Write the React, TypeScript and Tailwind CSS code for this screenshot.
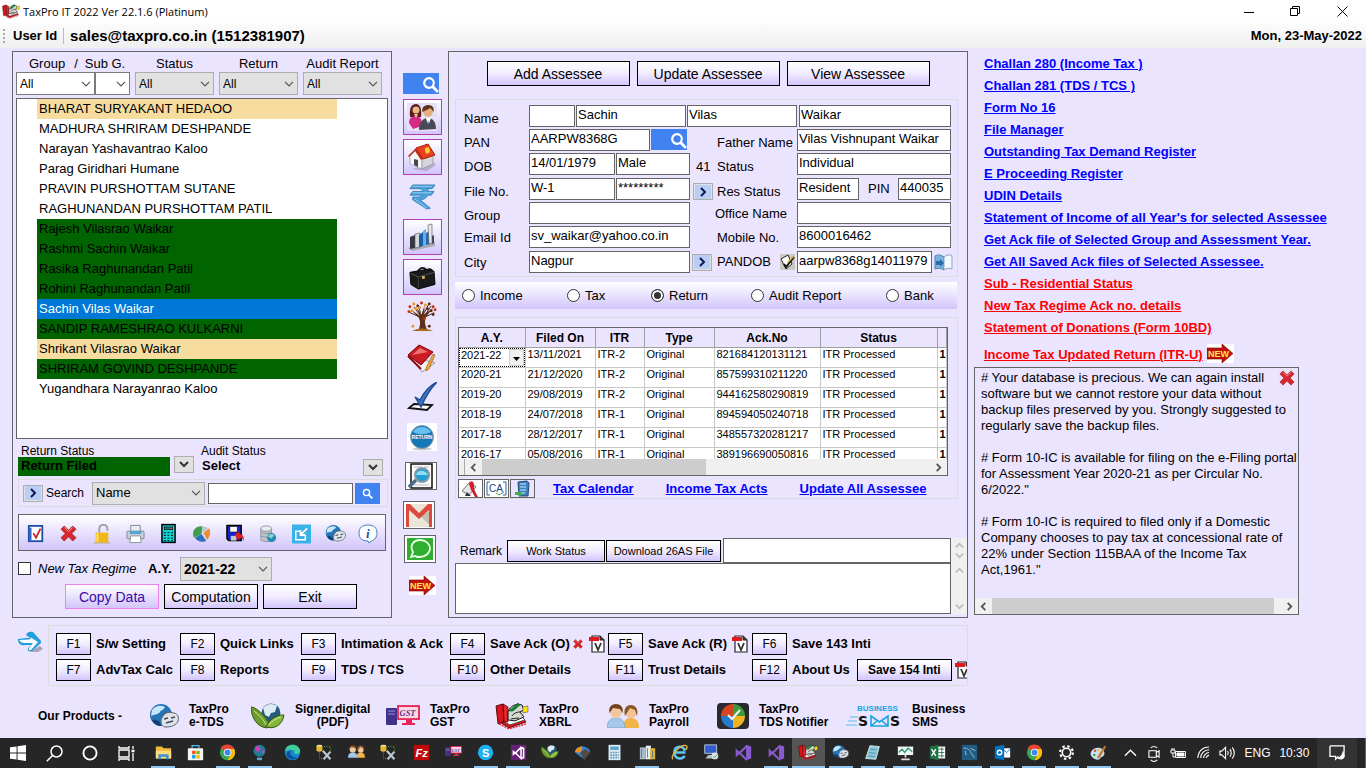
import React, { ReactNode } from 'react';

type IconProps = { className?: string };

/* ---------- shared class strings ---------- */

const violetButton = 'border border-black bg-gradient-to-b from-white via-[#f1ecff] to-[#d2c5fb] text-center whitespace-nowrap';
const fieldClass = 'h-[22px] min-w-0 border border-[#646464] bg-white px-px pb-1 text-[13px] leading-4 outline-none';
const groupBox = 'border border-[#dcdcdc]';

/* ---------- icons ---------- */

function Chevron({ className = '' }: IconProps) {
    return (
        <svg className={className} viewBox="0 0 10 6" width="10" height="6" fill="none" stroke="#555" strokeWidth="1.2">
            <path d="M1 .8 5 4.8 9 .8" />
        </svg>
    );
}

function ScrollArrow({ dir, faded }: { dir: 'left' | 'right' | 'up' | 'down'; faded?: boolean }) {
    const paths = { left: 'M7 1 3 5l4 4', right: 'M3 1l4 4-4 4', up: 'M1 7l4-4 4 4', down: 'M1 3l4 4 4-4' };
    return (
        <svg viewBox="0 0 10 10" width="9" height="9" fill="none" stroke={faded ? '#bdbdbd' : '#555'} strokeWidth="2">
            <path d={paths[dir]} />
        </svg>
    );
}

function SearchGlyph({ size = 17 }: { size?: number }) {
    return (
        <svg viewBox="0 0 17 17" width={size} height={size} fill="none" stroke="white" strokeWidth="2.2">
            <circle cx="7" cy="7" r="4.8" />
            <path d="m10.5 10.5 5.5 5.5" strokeWidth="2.8" />
        </svg>
    );
}

function BooksIcon({ size = 34 }: { size?: number }) {
    return (
        <svg viewBox="0 0 34 28" width={size} height={size * 0.82}>
            <path d="M3 19 14 26 31 20 28 16 8 16z" fill="#d71920" stroke="#6d0508" />
            <path d="M5 18 15 23 30 18 26 14 9 13z" fill="#fff" stroke="#333" strokeWidth=".8" />
            <path d="M1 4 8 2 9 20 3 22z" fill="#d9141b" stroke="#5b0508" />
            <path d="M8 2 13 5 13 20 9 20z" fill="#e4252c" stroke="#5b0508" strokeWidth=".8" />
            <path d="M13 10c2-6 8-9 14-7l2 5-4 2 4 5-9 4-7-1z" fill="#d5d8d1" stroke="#111" />
            <path d="M17 14c2-3 5-4 8-4M16 17l8-1" stroke="#222" fill="none" />
            <path d="M14 9 23 1l2 2-7 6z" fill="#118a35" stroke="#052" strokeWidth=".6" />
            <path d="M28 5l5-1v6l-5 1z" fill="#ffe600" stroke="#555" strokeWidth=".6" />
            <path d="m4 22 10 5 17-5" fill="none" stroke="#e1262d" strokeWidth="1.4" strokeDasharray="2 1" />
        </svg>
    );
}

function CrossIcon({ size = 18 }: { size?: number }) {
    return (
        <svg viewBox="0 0 18 18" width={size} height={size}>
            <path d="M4.5 1 9 5.5 13.5 1 17 4.5 12.5 9l4.5 4.5-3.5 3.5L9 12.5 4.5 17 1 13.5 5.500 9 1 4.500z" fill="#d8262c" stroke="#a22a2a" strokeWidth=".8" />
            <path d="M4.500 2.500 9 7l4.500-4.500" fill="none" stroke="#f49a94" />
        </svg>
    );
}

function NewArrow() {
    return (
        <span className="inline-block bg-white">
            <svg viewBox="0 0 27 19" width="27" height="19">
                <path d="M0 4h15V0l11 9.500L15 19v-4H0z" fill="#c3120e" stroke="#7d0000" strokeWidth=".6" />
                <text x="1" y="13" fontSize="9" fontWeight="700" fontFamily="Liberation Sans, sans-serif" fill="#ffe64a">NEW</text>
            </svg>
        </span>
    );
}

function GlobeIcon({ size = 30 }: { size?: number }) {
    return (
        <svg viewBox="0 0 30 24" width={size} height={size * 0.8}>
            <circle cx="12" cy="11" r="11" fill="#2674b4" />
            <path d="M3 6c4-5 9-5 13-3-2 4-3 2-5 5s-6 2-9 4z" fill="#c5e7fa" />
            <path d="M3 16c5-1 9 2 9 6-4 0-7-2-9-6z" fill="#123f77" />
            <path d="M14 12c2-4 7-4 11-3 4 1 5 4 4 8s-7 6-12 6c-4 0-5-3-5-6 0-2 1-3 2-5z" fill="#dfe3e9" stroke="#59616d" />
            <path d="m15 15 4-1m3 0 4-1m-9 6 7-2" stroke="#434b58" strokeWidth="1.500" />
        </svg>
    );
}

function LeafGlobe({ size = 34 }: { size?: number }) {
    return (
        <svg viewBox="0 0 34 26" width={size} height={size * 0.76}>
            <circle cx="20" cy="10" r="9.500" fill="#225c7d" />
            <path d="M12 5c4-5 10-5 14-2l-2 6-4 1-2 4-4-2z" fill="#dcecf2" />
            <path d="M0 4c4 0 13 7 18 16 2 3 0 5-3 5C7 24 0 16 0 4z" fill="#6c9c2b" stroke="#34570e" />
            <path d="M33 12c-8 0-15 5-18 12 8 3 17-2 18-12z" fill="#85b63e" stroke="#34570e" />
            <path d="M3 8c5 4 10 9 12 14m15-8c-5 2-9 4-12 8" fill="none" stroke="#d3e89c" />
        </svg>
    );
}

function GstIcon({ size = 34 }: { size?: number }) {
    return (
        <svg viewBox="0 0 34 22" width={size} height={size * 0.65}>
            <rect x="0" y="3" width="11" height="17" rx="1" fill="#40328b" />
            <path d="M2 6h7M2 9h7" stroke="#9c90dc" />
            <rect x="12" y="1" width="21" height="13" fill="#fbd9e4" stroke="#e62458" strokeWidth="1.800" />
            <text x="13.500" y="11" fontSize="8.500" fontWeight="700" fontStyle="italic" fontFamily="Liberation Serif, serif" fill="#59358c">GST</text>
            <path d="M20 15h6v3h3v2H16v-2h4z" fill="#e62458" />
        </svg>
    );
}

function PeopleIcon({ size = 32 }: { size?: number }) {
    return (
        <svg viewBox="0 0 32 25" width={size} height={size * 0.78}>
            <path d="M16 24c0-7 3-10 8-10s8 3 8 10z" fill="#f1b447" />
            <circle cx="24" cy="9" r="5.500" fill="#f2c396" />
            <path d="M18 12c-2-8 2-11 6-11s8 4 6 11l-2-6-5-2z" fill="#8c5726" />
            <path d="M0 24c0-7 4-10 9-10s9 3 9 10z" fill="#a7c8e8" stroke="#6d96bf" strokeWidth=".6" />
            <circle cx="9" cy="8" r="6" fill="#f1c89e" />
            <path d="M2.500 9C1 3 5 0 9 0s8 3 6.500 9L13 5 6 4z" fill="#70431d" />
        </svg>
    );
}

function NotifierIcon() {
    return (
        <svg viewBox="0 0 32 26" width="32" height="26">
            <rect width="32" height="26" rx="4" fill="#2a2a2e" />
            <path d="M16 13V1a12 12 0 0 1 12 12z" fill="#3d9c3a" />
            <path d="M16 13H28a12 12 0 0 1-12 12z" fill="#eeb422" />
            <path d="M16 13v12A12 12 0 0 1 4 13z" fill="#2679cc" />
            <path d="M16 13H4A12 12 0 0 1 16 1z" fill="#d7421f" />
            <path d="m11 12 4 4 8-9" fill="none" stroke="#f4f4f4" strokeWidth="2.200" />
        </svg>
    );
}

function SmsIcon() {
    return (
        <svg viewBox="0 0 56 28" width="56" height="28">
            <text x="11" y="9" fontSize="8" fontWeight="700" fontFamily="Liberation Sans, sans-serif" fill="#18a4e0">BUSINESS</text>
            <path d="M4 15h8M2 19h9M0 23h11" stroke="#5abfe9" />
            <text x="12" y="24" fontSize="14" fontWeight="700" fontFamily="DejaVu Sans, sans-serif" fill="#111">S</text>
            <path d="M25 14v10h17V14l-8.500 6zM25 24l6-5m11 5-6-5" fill="none" stroke="#18a4e0" strokeWidth="1.600" />
            <text x="44" y="24" fontSize="14" fontWeight="700" fontFamily="DejaVu Sans, sans-serif" fill="#111">S</text>
        </svg>
    );
}

function CoupleIcon() {
    return (
        <svg viewBox="0 0 30 28" width="30" height="28">
            <rect width="30" height="28" fill="#e7e0fb" />
            <path d="M3 14C2 4 5 1 9 1s6 5 5 13z" fill="#5b1f1b" />
            <path d="M2 20c0-5 3-7 7-7s6 3 6 10l-9 3z" fill="#d52b87" />
            <circle cx="9" cy="7" r="3.500" fill="#edb58b" />
            <path d="M7 11l2 4 2-4z" fill="#f2c6a0" />
            <path d="M12 27c0-8 4-12 9-12s8 4 8 11z" fill="#4a4b52" />
            <path d="m19 15 2 8 3-8z" fill="#fff" />
            <path d="m21 17 1 5-1 2-1-2z" fill="#27498b" />
            <circle cx="21" cy="9" r="4.800" fill="#e6ad7f" />
            <path d="M15.500 9c-1-5 2-7 6-7s6 3 5 7l-3-4z" fill="#5f3517" />
        </svg>
    );
}

function HouseIcon() {
    return (
        <svg viewBox="0 0 30 30" width="30" height="30">
            <path d="M5 27 20 29 29 23 26 20z" fill="#9c94b3" opacity=".6" />
            <path d="M3 14 9 8l6 8v11L3 22z" fill="#f5f5f7" stroke="#9a9aa2" strokeWidth=".7" />
            <path d="m15 16 11-4v10l-11 5z" fill="#d5d6dc" stroke="#8d8d95" strokeWidth=".7" />
            <path d="M9 6 21 2l7 11-12 4z" fill="#e9401f" stroke="#a11f0d" />
            <path d="M1 14 9 6l7 11-2 1-6-9-6 6z" fill="#c42a12" />
            <path d="M7 17l4 1v7l-4-2z" fill="#444951" />
            <path d="m18 6 4-1 1 5-3 2-2-2z" fill="#f7ce2f" />
        </svg>
    );
}

function RupeeIcon() {
    return (
        <svg viewBox="0 0 30 28" width="28" height="26">
            <path d="M5 1h24l-3 4h-6c2 1 2 2 2 3h6l-3 4h-4c-1 3-4 5-8 5l11 9-4 1L5 17v-3h5c3 0 5-1 6-2H2l3-4h11c0-2-2-3-5-3H2z" fill="#4ba3da" stroke="#2474ad" strokeWidth=".8" />
            <path d="M5 2.500h21M5 9.500h20M7 16l13 10" fill="none" stroke="#a9d9f4" strokeWidth=".8" />
        </svg>
    );
}

function ChartIcon() {
    return (
        <svg viewBox="0 0 30 28" width="30" height="28">
            <path d="M1 25 28 19v4L5 28z" fill="#a9a9b3" />
            <path d="M3 14l5-2v13l-5 1z" fill="#333841" />
            <path d="M8 11l5-1v14l-5 1z" fill="#d4d8dd" stroke="#555" strokeWidth=".6" />
            <path d="M12 12l4-3v14l-4 1z" fill="#1b5ea6" />
            <path d="M16 8l3-2v16l-3 1z" fill="#67aee6" />
            <path d="M19 10l4-2v13l-4 1z" fill="#2168b3" />
            <path d="M21 2l4-1v19l-3 1z" fill="#e4e6ea" stroke="#555" strokeWidth=".6" />
            <path d="M25 13l2-1v8l-2 1z" fill="#44484f" />
        </svg>
    );
}

function BriefcaseIcon() {
    return (
        <svg viewBox="0 0 30 28" width="28" height="26">
            <path d="M10 8c0-5 9-7 10-2l-2 1c-1-3-6-1-6 1z" fill="#222" />
            <path d="M2 9 24 5l4 3 1 14-18 5-8-5z" fill="#1a1a1c" stroke="#000" />
            <path d="M3 10l8 4 17-5" fill="none" stroke="#555" />
            <path d="M11 14v12" stroke="#444" />
            <rect x="15" y="13" width="3" height="3" fill="#d3b75b" />
        </svg>
    );
}

function TreeIcon() {
    const leaves = [[3, 6], [7, 3], [11, 5], [15, 2], [19, 4], [23, 3], [27, 6], [5, 10], [25, 10], [29, 9], [9, 8], [21, 8], [2, 11], [13, 7], [27, 14], [18, 18], [6, 26], [23, 26]];
    return (
        <svg viewBox="0 0 32 32" width="31" height="31">
            <path d="M12 30c2-6 2-9 0-13L4 9l9 6-3-8 5 7 3-9 0 9 9-7-7 9c-2 4-2 8 1 14z" fill="#5f3016" />
            <path d="M7 6 13 14M25 5l-6 9M3 12l9 4M28 12l-8 4M11 4l3 8M22 4l-4 8" stroke="#43230f" />
            {leaves.map(([x, y], i) => (
                <circle key={i} cx={x} cy={y} r="1.500" fill={i % 3 === 0 ? '#c62f13' : i % 3 === 1 ? '#e59a1c' : '#5d2c12'} />
            ))}
            <path d="M5 31c8-4 15-3 22 0z" fill="#a66a1e" />
        </svg>
    );
}

function RedBookIcon() {
    return (
        <svg viewBox="0 0 30 29" width="30" height="29">
            <path d="M1 12 10 22 15 28 28 19z" fill="#f2f0f0" stroke="#777" strokeWidth=".7" />
            <path d="M1 11 12 1l14 7-12 13z" fill="#cb1c23" stroke="#77080c" />
            <path d="m5 11 8-7 8 4z" fill="#ee7474" />
            <path d="m19 24 7-14 2 1-6 14-3 2z" fill="#f1a437" stroke="#8b561b" strokeWidth=".6" />
            <path d="M1 12l13 13" stroke="#8a0b11" strokeWidth="2" />
        </svg>
    );
}

function TickIcon({ size = 30 }: { size?: number }) {
    return (
        <svg viewBox="0 0 30 30" width={size} height={size}>
            <path d="M7 22 25 23l-5 5-18-2z" fill="#fff" stroke="#111" strokeWidth="1.800" />
            <path d="m8 15 5 3C17 10 22 4 30 0 22 8 18 16 14 25z" fill="#3f74c4" stroke="#1f4a92" strokeWidth="1.400" />
        </svg>
    );
}

function ReturnBadge() {
    return (
        <span className="bg-white">
            <svg viewBox="0 0 30 28" width="30" height="28">
                <ellipse cx="15" cy="26" rx="10" ry="1.500" fill="#ccc" />
                <circle cx="15" cy="14" r="11.500" fill="#1677b9" stroke="#8b9caa" />
                <path d="M6 9c3-6 14-7 18 0-6 3-12 3-18 0z" fill="#66c1ee" />
                <text x="15" y="16" fontSize="5" fontWeight="700" fontFamily="Liberation Sans, sans-serif" textAnchor="middle" fill="white">RETURN</text>
            </svg>
        </span>
    );
}

function DocSearchIcon() {
    return (
        <svg viewBox="0 0 30 26" width="30" height="26">
            <rect width="30" height="26" fill="white" />
            <rect x="5" y="1" width="21" height="24" fill="#fafafa" stroke="#111" strokeWidth="1.500" />
            <path d="M8 4h8m2 0h5M8 22h15" stroke="#bbb" />
            <path d="m10 17-7 7" stroke="#4c6c88" strokeWidth="3.500" />
            <circle cx="16" cy="12" r="7" fill="#1f9fd6" stroke="#8797a4" strokeWidth="2" />
            <path d="M10 12c1-5 9-6 12 0z" fill="#8edcf5" />
        </svg>
    );
}

function GmailIcon() {
    return (
        <svg viewBox="0 0 30 26" width="30" height="26">
            <rect width="30" height="26" fill="white" />
            <path d="M2 2h26v23H2z" fill="#ece6d9" />
            <path d="M16 14 28 25V8z" fill="#c6beb0" />
            <path d="M2 2h4l9 9 9-9h4v23h-3V8L15 17 5 8v17H2z" fill="#db4a3d" />
        </svg>
    );
}

function WhatsAppIcon() {
    return (
        <svg viewBox="0 0 30 26" width="30" height="26">
            <rect width="30" height="26" fill="white" />
            <rect x="2" y="2" width="26" height="22" fill="#2fae2f" />
            <path d="M6 21l2-5C4 9 9 4 15 4s10 4 10 8.500S20 21 15 21c-2 0-4 0-5-1z" fill="none" stroke="#e9ffe4" strokeWidth="1.800" />
        </svg>
    );
}

function FormTick() {
    return (
        <svg viewBox="0 0 20 20" width="18" height="20">
            <rect x="2" y="1" width="15" height="17" fill="#fff" stroke="#1b4fa8" strokeWidth="2" />
            <path d="M2 3h3v14H2z" fill="#2f66bf" />
            <path d="m7 9 3 5 5-10" fill="none" stroke="#c5252b" strokeWidth="2" />
        </svg>
    );
}

function LockIcon() {
    return (
        <svg viewBox="0 0 20 22" width="18" height="21">
            <path d="M7 10V6c0-6 9-6 9 0v2" fill="none" stroke="#9b9ba0" strokeWidth="2" />
            <rect x="3" y="10" width="14" height="11" fill="#eeb81c" />
            <path d="M5 11v9" stroke="#ffe681" strokeWidth="2" />
            <path d="M1 21.500h18" stroke="#bba74b" />
        </svg>
    );
}

function PrinterIcon() {
    return (
        <svg viewBox="0 0 20 20" width="19" height="20">
            <path d="M5 1h10v7H5z" fill="#e8edf2" stroke="#818891" />
            <rect x="1" y="7" width="18" height="8" rx="1" fill="#cad1d8" stroke="#7d858e" />
            <path d="M4 7h12v3H4z" fill="#4aa6d2" />
            <path d="M5 12h10l1 7H4z" fill="#fff" stroke="#8b9299" />
        </svg>
    );
}

function CalculatorIcon() {
    return (
        <svg viewBox="0 0 16 21" width="15" height="21">
            <rect x="1" y="1" width="14" height="19" fill="#13d6d6" stroke="#000" strokeWidth="1.600" />
            <rect x="3.500" y="3.500" width="9" height="3" fill="#1f6f76" stroke="#000" strokeWidth=".6" />
            <path d="M9 5h3" stroke="#f33" />
            <path d="M3 9.500h10M3 12.500h10M3 15.500h10M3 18h10" stroke="#02393b" strokeWidth="1.300" strokeDasharray="2.200 1.600" />
        </svg>
    );
}

function PieIcon() {
    return (
        <svg viewBox="0 0 20 18" width="19" height="18">
            <path d="M10 9 2 13C-1 6 4 0 11 1z" fill="#3e9e4c" />
            <path d="M10 9 3 13c3 5 9 5 12 3z" fill="#2c70b7" />
            <path d="M12 8 18 3c2 4 1 9-2 12z" fill="#ef8b2c" />
            <path d="M11 8V1c3 0 5 1 6 2z" fill="#b9c5cf" />
        </svg>
    );
}

function FloppyIcon() {
    return (
        <svg viewBox="0 0 20 19" width="19" height="19">
            <path d="M1 1h15v16H3l-2-2z" fill="#1722d1" stroke="#000" strokeWidth="1.500" />
            <path d="M4 2h8v6H4z" fill="#fff" stroke="#000" strokeWidth=".7" />
            <path d="M5 12h6v5H5z" fill="#c8c8c8" />
            <path d="M9 11 14 7v3c4 0 5 3 5 8-1-3-2-4-5-4v3z" fill="#e0201b" />
        </svg>
    );
}

function DatabaseIcon() {
    return (
        <svg viewBox="0 0 20 20" width="18" height="20">
            <path d="M2 4v13c4 2 10 2 12 0V4z" fill="#bfc5cb" stroke="#8c949c" />
            <ellipse cx="8" cy="4" rx="6" ry="3" fill="#e9ecef" stroke="#8c949c" />
            <path d="M2 8c3 2 9 2 12 0M2 12c3 2 9 2 12 0" fill="none" stroke="#8c949c" />
            <circle cx="14" cy="14" r="5" fill="#2389b5" />
            <path d="M10 13c2-4 5-3 7-2l-3 4z" fill="#8cd2cf" />
        </svg>
    );
}

function ShrinkIcon() {
    return (
        <svg viewBox="0 0 20 20" width="19" height="20">
            <rect width="20" height="20" fill="#38b2e8" />
            <path d="M9 7H4v9h10v-5" fill="none" stroke="white" strokeWidth="1.600" />
            <path d="M16 4 9 11m0-5v5h5" fill="none" stroke="white" strokeWidth="2" />
        </svg>
    );
}

function InfoIcon() {
    return (
        <svg viewBox="0 0 20 20" width="20" height="20">
            <path d="M10 1c6 0 9 3 9 8 0 4-2 7-6 8l-2 2-1-2C4 17 1 14 1 9s3-8 9-8z" fill="#fff" stroke="#3e7fc0" />
            <text x="8" y="14" fontSize="13" fontWeight="700" fontStyle="italic" fontFamily="Liberation Serif, serif" fill="#1753a5">i</text>
        </svg>
    );
}

function PdfIcon() {
    return (
        <svg viewBox="0 0 16 18" width="16" height="18">
            <path d="M3 1h8l4 4v12H3z" fill="#fff" stroke="#222" strokeWidth="1.200" />
            <path d="M11 1v4h4" fill="#444" stroke="#222" />
            <path d="M0 2h10v4H0z" fill="#e3191e" />
            <path d="m6 8 3 7 3-7" fill="none" stroke="#333" strokeWidth="1.800" />
        </svg>
    );
}

function HandArrow() {
    return (
        <svg viewBox="0 0 27 22" width="27" height="22">
            <path d="M12 21h9l5-3-3-3z" fill="#a9a3bb" />
            <path d="M9 4c1-3 4-4 7-3l8 9v2l-9 8h-4v-3l3-3H8c-4 1-6-1-7-4V8l8-1h4z" fill="#219fd8" />
            <path d="m13 6 8 5-7 8h-2v-2l4-5H8c-3 0-5-1-6-3l10-.5 2-1z" fill="#fff" />
        </svg>
    );
}

function GoIcon() {
    return (
        <svg viewBox="0 0 16 14" width="16" height="14">
            <rect width="16" height="14" fill="#b9cdf5" />
            <path d="m6 3 4 4-4 4" fill="none" stroke="#101854" strokeWidth="2" />
        </svg>
    );
}

/* ---------- small controls ---------- */

function GoButton({ label }: { label: string }) {
    return (
        <button aria-label={label} className="flex h-[17px] w-5 shrink-0 items-center justify-center border border-[#adadad] bg-[#e1e1e1]">
            <GoIcon />
        </button>
    );
}

function DropButton({ label }: { label: string }) {
    return (
        <button aria-label={label} className="flex h-[17px] w-5 shrink-0 items-center justify-center border border-[#adadad] bg-[#e1e1e1]">
            <svg viewBox="0 0 10 7" width="10" height="7" fill="none" stroke="#333" strokeWidth="2"><path d="m1 1 4 4 4-4" /></svg>
        </button>
    );
}

function Combo({ label, value, className, white }: { label: string; value: string; className: string; white?: boolean }) {
    return (
        <span className={`relative flex ${className}`}>
            <select
                aria-label={label}
                className={`w-full appearance-none border pl-[3px] outline-none ${white ? 'border-[#7a7a7a] bg-white' : 'border-[#adadad] bg-[#e1e1e1]'}`}
            >
                <option>{value}</option>
            </select>
            <Chevron className="pointer-events-none absolute right-1 top-1/2 -translate-y-1/2" />
        </span>
    );
}

function Field({ label, value = '', className }: { label: string; value?: string; className: string }) {
    return <input aria-label={label} defaultValue={value} className={`${fieldClass} ${className}`} />;
}

/* ---------- left panel ---------- */

const assessees = [
    { name: 'BHARAT SURYAKANT HEDAOO', tone: 'bg-[#f7dca0]' },
    { name: 'MADHURA SHRIRAM DESHPANDE', tone: '' },
    { name: 'Narayan Yashavantrao Kaloo', tone: '' },
    { name: 'Parag Giridhari Humane', tone: '' },
    { name: 'PRAVIN PURSHOTTAM SUTANE', tone: '' },
    { name: 'RAGHUNANDAN PURSHOTTAM PATIL', tone: '' },
    { name: 'Rajesh Vilasrao Waikar', tone: 'bg-[#006400]' },
    { name: 'Rashmi Sachin Waikar', tone: 'bg-[#006400]' },
    { name: 'Rasika Raghunandan Patil', tone: 'bg-[#006400]' },
    { name: 'Rohini Raghunandan Patil', tone: 'bg-[#006400]' },
    { name: 'Sachin Vilas Waikar', tone: 'bg-[#0078d7] text-white' },
    { name: 'SANDIP RAMESHRAO KULKARNI', tone: 'bg-[#006400]' },
    { name: 'Shrikant Vilasrao Waikar', tone: 'bg-[#f7dca0]' },
    { name: 'SHRIRAM GOVIND DESHPANDE', tone: 'bg-[#006400]' },
    { name: 'Yugandhara Narayanrao Kaloo', tone: '' },
];

const toolIcons: [string, ReactNode][] = [
    ['Select', <FormTick />],
    ['Delete', <CrossIcon size={17} />],
    ['Unlock', <LockIcon />],
    ['Print', <PrinterIcon />],
    ['Calculator', <CalculatorIcon />],
    ['Statistics', <PieIcon />],
    ['Backup', <FloppyIcon />],
    ['Database', <DatabaseIcon />],
    ['Minimise', <ShrinkIcon />],
    ['e-TDS', <GlobeIcon size={21} />],
    ['Info', <InfoIcon />],
];

function LeftPanel() {
    return (
        <section className="flex flex-col border border-[#646464] pb-2">
            <div className="flex gap-[5px] px-[3px]">
                <div className="w-[114px]">
                    <div className="flex h-5 items-end pl-[13px]"><span>Group</span><span className="pl-[9px]">/</span><span className="pl-[7px]">Sub G.</span></div>
                    <div className="flex">
                        <Combo label="Group" value="All" className="h-[23px] w-[79px] text-xs" white />
                        <Combo label="Sub G." value="" className="h-[23px] w-[35px] text-xs" white />
                    </div>
                </div>
                {['Status', 'Return', 'Audit Report'].map((label) => (
                    <div key={label} className="w-[79px]">
                        <div className="flex h-5 items-end justify-center whitespace-nowrap">{label}</div>
                        <Combo label={label} value="All" className="h-[23px] text-xs" />
                    </div>
                ))}
            </div>

            <ul role="listbox" className="mx-[3px] mt-[3px] h-[341px] overflow-hidden border border-[#646464] bg-white pl-5">
                {assessees.map((a) => (
                    <li key={a.name} role="option" aria-selected={a.name === 'Sachin Vilas Waikar'} className={`h-5 w-[300px] pl-0.5 leading-5 ${a.tone}`}>
                        {a.name}
                    </li>
                ))}
            </ul>

            <div className="mt-[5px] flex justify-between pl-[5px] pr-2 text-xs">
                <div className="flex gap-1">
                    <div className="w-[152px]">
                        <div className="h-[13px] pl-[3px] leading-[14px]">Return Status</div>
                        <div className="h-[19px] bg-[#006400] pl-[3px] text-[13px] font-bold leading-[18px]">Return Filed</div>
                    </div>
                    <div className="pt-3"><DropButton label="Return Status" /></div>
                </div>
                <div className="flex w-[182px] items-end justify-between">
                    <div className="self-start">
                        <div className="h-[13px] leading-[14px]">Audit Status</div>
                        <div className="pl-px text-[13px] font-bold leading-[18px]">Select</div>
                    </div>
                    <DropButton label="Audit Status" />
                </div>
            </div>

            <form className={`ml-[5px] mr-[3px] mt-[3px] flex h-7 items-center px-1 text-xs ${groupBox}`}>
                <GoButton label="Search" />
                <label htmlFor="search" className="w-[49px] pl-[3px]">Search</label>
                <Combo label="Name" value="Name" className="h-[23px] w-[113px] text-[13px]" />
                <input id="search" className="ml-[3px] h-[21px] min-w-0 flex-1 border border-[#646464] bg-white px-1" />
                <button type="button" aria-label="Find" className="ml-0.5 mr-[3px] flex h-[21px] w-[25px] items-center justify-center bg-[#4083f0]"><SearchGlyph size={11} /></button>
            </form>

            <div className="ml-[5px] mr-[5px] mt-[7px] flex h-[37px] items-center justify-around border border-[#646464] bg-gradient-to-b from-white to-[#d2c5fb] pt-0.5">
                {toolIcons.map(([name, icon]) => (
                    <button key={name} aria-label={name} className="flex w-6 justify-center">{icon}</button>
                ))}
            </div>

            <div className="mt-[5px] flex h-[25px] items-center pl-[5px]">
                <input id="regime" type="checkbox" className="h-[13px] w-[13px] appearance-none border border-[#333] bg-white" />
                <label htmlFor="regime" className="w-[117px] whitespace-nowrap pl-[7px] italic">New Tax Regime</label>
                <span className="w-8 font-bold">A.Y.</span>
                <Combo label="A.Y." value="2021-22" className="h-6 w-[92px] text-sm font-bold" />
            </div>

            <div className="mt-[3px] flex justify-center gap-[5px] pl-[18px] text-sm">
                <button className="h-[25px] w-[94px] border border-[#ee82ee] bg-gradient-to-b from-white to-[#d2c5fb] text-[#3a0ca3]">Copy Data</button>
                <button className={`h-[25px] w-[94px] ${violetButton}`}>Computation</button>
                <button className={`h-[25px] w-[94px] ${violetButton}`}>Exit</button>
            </div>
        </section>
    );
}

/* ---------- icon strip ---------- */

function FramedButton({ label, children }: { label: string; children: ReactNode }) {
    return (
        <button aria-label={label} className="flex h-9 w-[39px] items-center justify-center border border-[#b040b8] bg-gradient-to-b from-white to-[#d2c5fb]">
            {children}
        </button>
    );
}

function IconStrip() {
    return (
        <nav className="flex flex-col items-center pl-1 pt-[22px]">
            <button aria-label="Find" className="mb-[5px] mr-0.5 flex h-[21px] w-9 items-center justify-end bg-[#4083f0] pt-0.5"><SearchGlyph /></button>
            <FramedButton label="Assessee"><CoupleIcon /></FramedButton>
            <div className="h-1" />
            <FramedButton label="House"><HouseIcon /></FramedButton>
            <button aria-label="Income" className="flex h-11 items-center"><RupeeIcon /></button>
            <FramedButton label="Capital Gain"><ChartIcon /></FramedButton>
            <div className="h-1" />
            <FramedButton label="Business"><BriefcaseIcon /></FramedButton>
            <button aria-label="Agriculture" className="flex h-[43px] items-center"><TreeIcon /></button>
            <button aria-label="Notes" className="flex h-10 items-center"><RedBookIcon /></button>
            <button aria-label="Verify" className="flex h-[38px] items-center"><TickIcon /></button>
            <button aria-label="Return" className="flex h-[42px] items-center"><ReturnBadge /></button>
            <button aria-label="View" className="mb-[5px] mr-0.5 mt-1 border border-[#646464]"><DocSearchIcon /></button>
            <button aria-label="Gmail" className="mb-1.5 mr-1.5 mt-1.5 border border-[#646464]"><GmailIcon /></button>
            <button aria-label="WhatsApp" className="mr-1 border border-[#646464]"><WhatsAppIcon /></button>
            <button aria-label="New" className="flex h-11 items-center"><NewArrow /></button>
        </nav>
    );
}

/* ---------- centre panel ---------- */

function Caption({ children, className }: { children: ReactNode; className: string }) {
    return <span className={`shrink-0 self-end whitespace-nowrap ${className}`}>{children}</span>;
}

function AssesseeForm() {
    return (
        <form className={`flex flex-col gap-[3px] pb-[3px] pl-2 pr-1.5 pt-[5px] ${groupBox}`}>
            <div className="flex flex-col gap-0.5">
                <div className="flex">
                    <Caption className="w-[65px]">Name</Caption>
                    <Field label="Title" className="w-[46px]" />
                    <Field label="First name" value="Sachin" className="ml-px w-[110px]" />
                    <Field label="Middle name" value="Vilas" className="ml-px w-[110px]" />
                    <Field label="Last name" value="Waikar" className="ml-0.5 flex-1" />
                </div>
                <div className="flex">
                    <Caption className="w-[65px]">PAN</Caption>
                    <Field label="PAN" value="AARPW8368G" className="w-[121px]" />
                    <button type="button" aria-label="Find PAN" className="ml-px flex h-[21px] w-9 items-center justify-end bg-[#4083f0] pt-0.5"><SearchGlyph /></button>
                    <Caption className="ml-[30px] w-20">Father Name</Caption>
                    <Field label="Father Name" value="Vilas Vishnupant Waikar" className="flex-1" />
                </div>
                <div className="flex">
                    <Caption className="w-[65px]">DOB</Caption>
                    <Field label="DOB" value="14/01/1979" className="w-[86px]" />
                    <Field label="Gender" value="Male" className="ml-px w-[74px]" />
                    <Caption className="w-[27px] pl-1.5">41</Caption>
                    <Caption className="w-20">Status</Caption>
                    <Field label="Status" value="Individual" className="flex-1" />
                </div>
            </div>
            <div className="flex flex-col gap-0.5">
                <div className="flex">
                    <Caption className="w-[65px]">File No.</Caption>
                    <Field label="File No." value="W-1" className="w-[86px]" />
                    <Field label="Password" value="*********" className="ml-px w-[74px]" />
                    <div className="w-[27px] self-end pl-[3px]"><GoButton label="File" /></div>
                    <Caption className="w-20">Res Status</Caption>
                    <Field label="Res Status" value="Resident" className="w-[62px]" />
                    <Caption className="w-[39px] pb-[3px] pl-[9px]">PIN</Caption>
                    <Field label="PIN" value="440035" className="flex-1" />
                </div>
                <div className="flex">
                    <Caption className="w-[65px]">Group</Caption>
                    <Field label="Group" className="w-[161px]" />
                    <Caption className="ml-[25px] w-[82px] pb-0.5">Office Name</Caption>
                    <Field label="Office Name" className="flex-1" />
                </div>
                <div className="flex">
                    <Caption className="w-[65px] pb-0.5">Email Id</Caption>
                    <Field label="Email Id" value="sv_waikar@yahoo.co.in" className="w-[161px]" />
                    <Caption className="ml-[27px] w-20 pb-0.5">Mobile No.</Caption>
                    <Field label="Mobile No." value="8600016462" className="flex-1" />
                </div>
            </div>
            <div className="-mr-1.5 flex items-center">
                <Caption className="w-[65px] pb-0.5">City</Caption>
                <Field label="City" value="Nagpur" className="w-[161px]" />
                <div className="w-[27px] shrink-0 pl-0.5"><GoButton label="City" /></div>
                <Caption className="w-[63px] pb-[3px]">PANDOB</Caption>
                <button type="button" aria-label="Edit" className="w-[17px] shrink-0">
                    <svg viewBox="0 0 15 16" width="15" height="16">
                        <rect width="15" height="16" fill="#c9c9c4" />
                        <path d="M1 5 8 1l4 9-6 5z" fill="#fff" stroke="#222" />
                        <path d="m4 10 2 3 8-10" fill="none" stroke="#111" strokeWidth="2" />
                        <path d="m7 8 6-6 1 1-6 6z" fill="#d9b22b" />
                    </svg>
                </button>
                <Field label="PANDOB" value="aarpw8368g14011979" className="w-[135px]" />
                <button type="button" aria-label="Open" className="ml-0.5 shrink-0">
                    <svg viewBox="0 0 19 17" width="19" height="17">
                        <path d="M1 2c3-2 6-1 9 1v13c-3-2-6-2-9-1z" fill="#7eb2dc" stroke="#4882b2" />
                        <path d="M10 3c3-2 5-3 8-1v13c-3-1-5-1-8 1z" fill="#f3f8fc" stroke="#88a9c3" />
                        <path d="m2 7h4V5l4 4-4 4v-2H2z" fill="#286ca9" />
                    </svg>
                </button>
            </div>
        </form>
    );
}

const returnTabs = [
    { name: 'Income', width: 'w-[105px]' },
    { name: 'Tax', width: 'w-[84px]' },
    { name: 'Return', width: 'w-[100px]' },
    { name: 'Audit Report', width: 'w-[135px]' },
    { name: 'Bank', width: 'flex-1' },
];

const returns = [
    ['2021-22', '13/11/2021', 'ITR-2', 'Original', '821684120131121', 'ITR Processed', '1'],
    ['2020-21', '21/12/2020', 'ITR-2', 'Original', '857599310211220', 'ITR Processed', '1'],
    ['2019-20', '29/08/2019', 'ITR-2', 'Original', '944162580290819', 'ITR Processed', '1'],
    ['2018-19', '24/07/2018', 'ITR-1', 'Original', '894594050240718', 'ITR Processed', '1'],
    ['2017-18', '28/12/2017', 'ITR-1', 'Original', '348557320281217', 'ITR Processed', '1'],
    ['2016-17', '05/08/2016', 'ITR-1', 'Original', '389196690050816', 'ITR Processed', '1'],
];

function ReturnsTable() {
    return (
        <div className="mr-[9px] overflow-hidden border border-[#646464] bg-white">
            <div className="h-[131px] overflow-hidden">
                <table className="w-full table-fixed border-collapse text-[11px]">
                    <colgroup>
                        <col className="w-[66px]" /><col className="w-[70px]" /><col className="w-[49px]" /><col className="w-[70px]" />
                        <col className="w-[106px]" /><col className="w-[117px]" /><col />
                    </colgroup>
                    <thead>
                        <tr className="h-[19px] bg-[#ebe4ff] text-xs">
                            {['A.Y.', 'Filed On', 'ITR', 'Type', 'Ack.No', 'Status', ''].map((h, i) => (
                                <th key={i} className="border-b border-r border-[#a0a0a0] p-0 pt-0.5 leading-4">{h}</th>
                            ))}
                        </tr>
                    </thead>
                    <tbody>
                        {returns.map((row, r) => (
                            <tr key={row[0]} className="h-5">
                                {row.map((cell, c) => (
                                    <td key={c} className={`border-b border-r border-[#c8c8c8] p-0 align-top leading-3 ${c === 6 ? 'pl-0.5 font-bold' : ''}`}>
                                        {r === 0 && c === 0 ? (
                                            <div className="flex h-[19px] justify-between border border-dotted border-black pl-px leading-3">
                                                {cell}
                                                <button aria-label="Choose year" className="flex w-[15px] items-center justify-center border border-[#ccc] bg-[#f0f0f0] pt-1">
                                                    <svg viewBox="0 0 7 4" width="7" height="4"><path d="M0 0h7L3.500 4z" /></svg>
                                                </button>
                                            </div>
                                        ) : (
                                            <span className={c === 6 ? '' : 'pl-0.5'}>{cell}</span>
                                        )}
                                    </td>
                                ))}
                            </tr>
                        ))}
                    </tbody>
                </table>
            </div>
            <div className="flex h-4 items-center bg-[#f0f0f0]">
                <div className="h-full w-1.5 border-r border-[#aaa]" />
                <div className="flex w-[17px] justify-center"><ScrollArrow dir="left" /></div>
                <div className="h-full w-56 bg-[#cdcdcd]" />
                <div className="flex flex-1 justify-end pr-1"><ScrollArrow dir="right" /></div>
            </div>
        </div>
    );
}

function VerticalScroll() {
    return (
        <div className="flex w-4 shrink-0 flex-col items-center justify-between bg-[#f0f0f0] py-[3px]">
            <ScrollArrow dir="up" faded />
            <ScrollArrow dir="down" faded />
        </div>
    );
}

function CentrePanel() {
    return (
        <section className="flex flex-col border border-[#646464] pl-1.5">
            <div className="mt-[9px] flex justify-center gap-[7px] pr-1.5 text-sm">
                {['Add Assessee', 'Update Assessee', 'View Assessee'].map((label) => (
                    <button key={label} className={`h-[25px] w-[143px] ${violetButton}`}>{label}</button>
                ))}
            </div>

            <div className="mr-[9px] mt-[13px]"><AssesseeForm /></div>

            <div role="radiogroup" className="mr-2.5 mt-[5px] flex h-[27px] items-center bg-gradient-to-b from-white to-[#d2c5fb] pl-[7px]">
                {returnTabs.map((tab) => (
                    <label key={tab.name} className={`flex items-center gap-[5px] whitespace-nowrap ${tab.width}`}>
                        <input
                            type="radio"
                            name="tab"
                            defaultChecked={tab.name === 'Return'}
                            className="h-[13px] w-[13px] appearance-none rounded-full border border-[#333] bg-white checked:bg-[#333] checked:shadow-[inset_0_0_0_2px_white]"
                        />
                        {tab.name}
                    </label>
                ))}
            </div>

            <div className={`mr-[9px] mt-2 pl-[2px] pt-[9px] ${groupBox}`}>
                <ReturnsTable />
                <div className="mt-[3px] flex items-center font-bold">
                    <button aria-label="Paint" className="mr-px border border-[#646464] bg-white">
                        <svg viewBox="0 0 23 17" width="23" height="17">
                            <path d="m3 11 8-9 6 5-7 8z" fill="#e5e6ea" stroke="#777" />
                            <path d="M10 4c2-5 6-3 5 5l4 8h-3l-4-7z" fill="#d5202b" />
                            <path d="m8 12 4 4H6z" fill="#333" />
                        </svg>
                    </button>
                    <button aria-label="CA" className="mr-px border border-[#646464] bg-white">
                        <svg viewBox="0 0 23 17" width="23" height="17">
                            <path d="M5 2H2v13h3M18 2h3v13h-3" fill="none" stroke="#2c5da5" />
                            <text x="4" y="12" fontSize="10" fontWeight="400" fontFamily="Liberation Sans, sans-serif" fill="#14438c">CA</text>
                            <path d="m11 13 3 2 5-3" stroke="#4da34c" fill="none" />
                        </svg>
                    </button>
                    <button aria-label="Server" className="border border-[#646464]">
                        <svg viewBox="0 0 23 17" width="23" height="17">
                            <path d="m7 2 9-1 2 2-1 13H8z" fill="#3c82bd" stroke="#1f4e79" />
                            <path d="M9 4h6M9 7h6M9 10h6M9 13h5" stroke="#cfe7fa" />
                            <path d="M4 12h4v-2l3 4-3 3v-2H4z" fill="#3fae49" />
                        </svg>
                    </button>
                    <a href="#calendar" className="ml-[18px] text-[#0000ff] underline">Tax Calendar</a>
                    <a href="#acts" className="ml-8 text-[#0000ff] underline">Income Tax Acts</a>
                    <a href="#update" className="ml-8 text-[#0000ff] underline">Update All Assessee</a>
                </div>
            </div>

            <div className="mt-[39px] flex items-center">
                <label htmlFor="remark" className="w-[52px] pl-[5px] text-xs">Remark</label>
                <button className={`h-[22px] w-[98px] text-[11px] ${violetButton}`}>Work Status</button>
                <button className={`ml-px h-[22px] w-[115px] text-[11px] ${violetButton}`}>Download 26AS File</button>
                <input id="remark" className="ml-0.5 h-[25px] min-w-0 flex-1 border border-[#646464] bg-white px-1" />
                <div className="flex self-stretch"><VerticalScroll /></div>
            </div>
            <div className="flex">
                <textarea aria-label="Remark details" className="h-[51px] min-w-0 flex-1 resize-none border border-[#646464] bg-white px-1" />
                <VerticalScroll />
            </div>
        </section>
    );
}

/* ---------- function keys and products ---------- */

function KeyItem({ code, label, children }: { code: string; label: string; children?: ReactNode }) {
    return (
        <div className="flex min-w-0 items-center">
            <button className={`h-[22px] w-[35px] shrink-0 text-xs ${violetButton}`}>{code}</button>
            <span className="whitespace-nowrap pl-[5px] font-bold">{label}</span>
            {children}
        </div>
    );
}

function FunctionKeys() {
    return (
        <section className="mt-[7px] flex">
            <button aria-label="More" className="mt-1.5 flex w-12 shrink-0 justify-end self-start pr-1"><HandArrow /></button>
            <div className={`grid min-w-0 flex-1 grid-cols-[124px_121px_149px_158px_144px_minmax(0,1fr)] gap-y-1 overflow-hidden pb-1 pl-[7px] pt-[7px] ${groupBox}`}>
                <KeyItem code="F1" label="S/w Setting" />
                <KeyItem code="F2" label="Quick Links" />
                <KeyItem code="F3" label="Intimation & Ack" />
                <KeyItem code="F4" label="Save Ack (O)">
                    <span className="flex-1 pl-[3px]"><CrossIcon size={10} /></span>
                    <span className="pr-[3px]"><PdfIcon /></span>
                </KeyItem>
                <KeyItem code="F5" label="Save Ack (R)">
                    <span className="pl-[5px]"><PdfIcon /></span>
                </KeyItem>
                <KeyItem code="F6" label="Save 143 Inti" />
                <KeyItem code="F7" label="AdvTax Calc" />
                <KeyItem code="F8" label="Reports" />
                <KeyItem code="F9" label="TDS / TCS" />
                <KeyItem code="F10" label="Other Details" />
                <KeyItem code="F11" label="Trust Details" />
                <KeyItem code="F12" label="About Us">
                    <button className={`ml-[7px] h-[22px] w-[95px] shrink-0 text-xs font-bold ${violetButton}`}>Save 154 Inti</button>
                    <span className="shrink-0 pl-[3px]"><PdfIcon /></span>
                </KeyItem>
            </div>
        </section>
    );
}

const products: { lines: [string, string]; width: string; icon: ReactNode; centered?: boolean }[] = [
    { lines: ['TaxPro', 'e-TDS'], width: 'w-[102px]', icon: <GlobeIcon /> },
    { lines: ['Signer.digital', '(PDF)'], width: 'w-[135px]', icon: <LeafGlobe />, centered: true },
    { lines: ['TaxPro', 'GST'], width: 'w-[109px]', icon: <GstIcon /> },
    { lines: ['TaxPro', 'XBRL'], width: 'w-[112px]', icon: <BooksIcon /> },
    { lines: ['TaxPro', 'Payroll'], width: 'w-[110px]', icon: <PeopleIcon /> },
    { lines: ['TaxPro', 'TDS Notifier'], width: 'w-[129px]', icon: <NotifierIcon /> },
    { lines: ['Business', 'SMS'], width: 'w-[121px]', icon: <SmsIcon /> },
];

function Products() {
    return (
        <section className="flex h-[52px] items-center pl-[38px] pt-2 text-xs font-bold">
            <span className="w-[111px]">Our Products -</span>
            {products.map((p) => (
                <a key={p.lines[1]} href="#product" className={`flex items-center gap-[10px] ${p.width}`}>
                    {p.icon}
                    <span className={`whitespace-nowrap leading-[13px] ${p.centered ? 'text-center' : ''}`}>{p.lines[0]}<br />{p.lines[1]}</span>
                </a>
            ))}
        </section>
    );
}

/* ---------- right column ---------- */

const blueLinks = [
    'Challan 280 (Income Tax )',
    'Challan 281 (TDS / TCS )',
    'Form No 16',
    'File Manager',
    'Outstanding Tax Demand Register',
    'E Proceeding Register',
    'UDIN Details',
    "Statement of Income of all Year's for selected Assessee",
    'Get Ack file of Selected Group and Assessment Year.',
    'Get All Saved Ack files of Selected Assessee.',
];

const redLinks = ['Sub - Residential Status', 'New Tax Regime Ack no. details', 'Statement of Donations (Form 10BD)'];

const notice = `# Your database is precious. We can again install
software but we cannot restore your data without
backup files preserved by you. Strongly suggested to
regularly save the backup files.

# Form 10-IC is available for filing on the e-Filing portal
for Assessment Year 2020-21 as per Circular No.
6/2022."

# Form 10-IC is required to filed only if a Domestic
Company chooses to pay tax at concessional rate of
22% under Section 115BAA of the Income Tax
Act,1961."`;

function RightColumn() {
    return (
        <aside className="min-w-0 flex-1 pl-1.5 pt-0.5">
            <nav className="flex flex-col pl-2.5 font-bold leading-[22px]">
                {blueLinks.map((t) => (
                    <a key={t} href="#link" className="self-start whitespace-nowrap text-[#0000ff] underline">{t}</a>
                ))}
                {redLinks.map((t) => (
                    <a key={t} href="#link" className="self-start whitespace-nowrap text-[#ff0000] underline">{t}</a>
                ))}
                <div className="flex h-7 items-center gap-1">
                    <a href="#itru" className="pt-1 text-[#ff0000] underline">Income Tax Updated Return (ITR-U)</a>
                    <NewArrow />
                </div>
            </nav>
            <div className="relative flex h-[248px] w-[325px] flex-col overflow-hidden border border-[#646464]">
                <p className="flex-1 whitespace-pre pl-1.5 pt-0.5 leading-4">{notice}</p>
                <button aria-label="Close notice" className="absolute right-[3px] top-0.5"><CrossIcon size={16} /></button>
                <div className="flex h-4 items-center bg-[#f0f0f0]">
                    <div className="flex w-[17px] justify-center"><ScrollArrow dir="left" /></div>
                    <div className="h-full flex-1 bg-[#cdcdcd]" />
                    <div className="flex w-6 justify-end pr-1"><ScrollArrow dir="right" /></div>
                </div>
            </div>
        </aside>
    );
}

/* ---------- taskbar ---------- */

function Svg20({ children }: { children: ReactNode }) {
    return <svg viewBox="0 0 20 20" width="17" height="17">{children}</svg>;
}

const chrome = (
    <Svg20>
        <circle cx="10" cy="10" r="9" fill="#34a853" />
        <path d="M10 10 2 5a9 9 0 0 1 16 1h-8z" fill="#ea4335" />
        <path d="M10 6h8a9 9 0 0 1-8 13l4-7z" fill="#fbbc04" />
        <circle cx="10" cy="10" r="4.500" fill="white" />
        <circle cx="10" cy="10" r="3.500" fill="#4285f4" />
    </Svg20>
);

const tools = (
    <Svg20>
        <path d="M9 3h8v6M4 10v7h5" fill="none" stroke="#5d9e53" strokeDasharray="1.500 1.500" />
        <ellipse cx="4" cy="2.500" rx="3.500" ry="1.500" fill="#f7e6a8" />
        <path d="M.5 2.500h7V8c-2 1.500-5 1.500-7 0z" fill="#e4b932" />
        <path d="m8 8 9 10M17 9 9 18" stroke="#bcc7d1" strokeWidth="2.500" />
    </Svg20>
);

const visualStudio = (
    <Svg20>
        <path d="m14 2-9 9-3-3v5l3-3 9 9" fill="none" stroke="#8a5bd0" strokeWidth="2.400" />
        <path d="m13 1 6 2v14l-6 2z" fill="#8a5bd0" />
    </Svg20>
);

const taskItems: { name: string; icon: ReactNode; open?: boolean; active?: boolean }[] = [
    { name: 'Explorer', open: true, icon: <Svg20><path d="M1 3h7l2 2h9v12H1z" fill="#f2b93b" /><path d="M1 8h18v9H1z" fill="#ffdb7b" /><path d="M4 12h12v6h-3v-3H7v3H4z" fill="#3c90d6" /></Svg20> },
    { name: 'Store', icon: <Svg20><path d="M6 5V2h8v3" fill="none" stroke="#52bdec" strokeWidth="1.500" /><rect x="1" y="5" width="18" height="14" rx="1" fill="#f5f5f5" /><path d="M6 8h4v4H6z" fill="#f25022" /><path d="M11 8h4v4h-4z" fill="#7fba00" /><path d="M6 13h4v4H6z" fill="#00a4ef" /><path d="M11 13h4v4h-4z" fill="#ffb900" /></Svg20> },
    { name: 'Chrome', open: true, icon: chrome },
    { name: 'World', open: true, icon: <Svg20><circle cx="10" cy="8" r="7" fill="#217c95" /><path d="M5 4c4-4 8 1 5 4s-4 0-5-4zM12 9l4-2-1 5z" fill="#d43cbe" /><path d="M7 16h6v3H7z" fill="#4da3df" /></Svg20> },
    { name: 'Edge', icon: <Svg20><circle cx="10" cy="10" r="9" fill="#1688d3" /><path d="M1 9C2-2 18-1 19 8c0 5-6 4-7 3 2-4-4-6-11-2z" fill="#3fcf9c" /><path d="M8 8c-2 3 0 8 7 8-3 3-8 3-11-1-2-4 0-7 4-7z" fill="#0f4f9b" /></Svg20> },
    { name: 'Tools', icon: tools },
    { name: 'Payroll', icon: <PeopleIcon size={17} /> },
    { name: 'Tools 2', icon: tools },
    { name: 'FileZilla', icon: <Svg20><rect x="1" y="1" width="18" height="18" fill="#bd0a0a" /><text x="3" y="15" fontSize="13" fontWeight="700" fontStyle="italic" fontFamily="Liberation Sans, sans-serif" fill="white">Fz</text></Svg20> },
    { name: 'GST', icon: <GstIcon size={17} /> },
    { name: 'Skype', open: true, icon: <Svg20><circle cx="10" cy="10" r="9" fill="#1db0f2" /><text x="6" y="15" fontSize="13" fontWeight="700" fontFamily="Liberation Sans, sans-serif" fill="white">S</text></Svg20> },
    { name: 'Visual Studio', open: true, icon: <Svg20><rect x="1" y="1" width="18" height="18" fill="#68217a" /><path d="m13 4-7 7-2-2v3l2-2 7 7V4l3 1v11l-3 1" fill="none" stroke="white" strokeWidth="1.800" /></Svg20> },
    { name: 'Signer', icon: <LeafGlobe size={18} /> },
    { name: 'Palette', icon: <Svg20><path d="M1 10C2 4 7 3 10 3s8 2 9 6l-7 9z" fill="#3482d0" /><path d="M1 9c2-5 6-6 9-6l-2 8z" fill="#e79127" /><path d="m7 10 6-4 6 4-7 9z" fill="#514a48" /></Svg20> },
    { name: 'Calculator', icon: <Svg20><rect x="3" y="1" width="14" height="18" fill="#d9edf9" /><path d="M5 3h10v4H5z" fill="#5fa3cf" /><path d="M5 10h10M5 13h10M5 16h10" stroke="#6c93b3" strokeWidth="2" strokeDasharray="2 1" /></Svg20> },
    { name: 'Servers', open: true, icon: <Svg20><path d="M1 4h7v14H1z" fill="#aabac7" /><path d="M8 2h6v16H8z" fill="#e9f0f4" /><path d="M13 5h6v13h-6z" fill="#e4b435" /><path d="M3 6v10m7-11v11m6-8v8" stroke="#3579a8" /></Svg20> },
    { name: 'Internet Explorer', icon: <Svg20><path d="M16 8c-1-7-12-6-12 2s9 9 12 4M4 10h13" fill="none" stroke="#60c5f3" strokeWidth="3" /><path d="M2 18C-1 13 12 0 18 2c2 2 0 4-1 5" fill="none" stroke="#e9bc3d" strokeWidth="1.500" /></Svg20> },
    { name: 'Remote Desktop', icon: <Svg20><path d="M2 1h14v10H2z" fill="#345ed0" stroke="#c8d3e0" /><path d="M6 13h7l2 4H3z" fill="#b5bdc6" /><circle cx="14" cy="14" r="4" fill="#dce3e8" /><path d="m12 14 2 2 3-4" stroke="#499b51" fill="none" /></Svg20> },
    { name: 'Visual Studio 2', icon: visualStudio },
    { name: 'Visual Studio 3', open: true, icon: visualStudio },
    { name: 'TaxPro', open: true, active: true, icon: <BooksIcon size={20} /> },
    { name: 'e-TDS', open: true, icon: <GlobeIcon size={17} /> },
    { name: 'Notepad', open: true, icon: <Svg20><path d="m7 2 11 1-4 15-12-1z" fill="#8bcadb" stroke="#dceef2" /><path d="m7 6 8 1M6 10l8 1M5 14l8 1" stroke="#488da4" /></Svg20> },
    { name: 'Monitor', open: true, icon: <Svg20><path d="M1 3h18v10H1z" fill="#eff7fa" /><path d="m2 10 4-4 3 4 4-5 5 4" fill="none" stroke="#33996b" strokeWidth="1.500" /><path d="M10 13v3m-5 2h10" stroke="#ddd" strokeWidth="2" /></Svg20> },
    { name: 'Excel', open: true, icon: <Svg20><path d="M8 3h11v14H8z" fill="white" /><path d="M11 6h7M11 10h7M11 14h7M15 4v12" stroke="#1d7244" /><path d="m1 3 10-2v18L1 17z" fill="#1d7244" /><path d="m3 6 5 8m0-8-5 8" stroke="white" strokeWidth="1.600" /></Svg20> },
    { name: 'MySQL', open: true, icon: <Svg20><rect x="1" y="1" width="18" height="18" fill="#215d83" /><path d="M3 5c5-1 8 3 9 6l4 5M5 8l1 5m5-8 6 3" fill="none" stroke="#a9cfe3" /></Svg20> },
    { name: 'Outlook', open: true, icon: <Svg20><path d="M10 5h9v11h-9z" fill="white" /><path d="m10 6 5 4 4-4" fill="none" stroke="#0072c6" /><path d="m1 3 11-2v18L1 17z" fill="#0072c6" /><circle cx="6.500" cy="10" r="2.600" fill="none" stroke="white" strokeWidth="1.600" /></Svg20> },
    { name: 'Chrome 2', open: true, icon: chrome },
    { name: 'Settings', open: true, icon: <Svg20><circle cx="10" cy="10" r="7.500" fill="none" stroke="white" strokeWidth="2.400" strokeDasharray="2.900 2.990" /><circle cx="10" cy="10" r="5" fill="none" stroke="white" strokeWidth="2" /></Svg20> },
    { name: 'Paint', open: true, icon: <Svg20><path d="M2 8c4-6 15-4 15 3 0 4-4 4-5 6s-6 2-9-1-3-5-1-8z" fill="#c5e1f1" /><circle cx="6" cy="8" r="1.500" fill="#e4493c" /><circle cx="10" cy="7" r="1.500" fill="#f1c232" /><circle cx="5" cy="13" r="1.500" fill="#43a047" /><path d="m8 16 9-14 2 1-8 14z" fill="#c57b31" /></Svg20> },
];

function Taskbar() {
    const launcher = 'flex h-full w-9 shrink-0 items-center justify-center';
    return (
        <footer className="flex h-[30px] shrink-0 items-center bg-[#262626] text-xs text-white">
            <button aria-label="Start" className={launcher}><svg viewBox="0 0 17 17" width="16" height="16" fill="white"><path d="M0 2.500 7 1.500V8H0zM8 1.300 17 0v8H8zM0 9h7v6.500L0 14.500zM8 9h9v8l-9-1.300z" /></svg></button>
            <button aria-label="Search" className={launcher}><svg viewBox="0 0 17 17" width="17" height="17" fill="none" stroke="white" strokeWidth="1.500"><circle cx="10.500" cy="6.500" r="5.500" /><path d="M6.500 10.500.8 16.200" /></svg></button>
            <button aria-label="Cortana" className={launcher}><svg viewBox="0 0 17 17" width="16" height="16" fill="none" stroke="white" strokeWidth="2"><circle cx="8.500" cy="8.500" r="7" /></svg></button>
            <button aria-label="Task view" className={launcher}><svg viewBox="0 0 17 17" width="17" height="17" fill="none" stroke="white" strokeWidth="1.300"><path d="M1 5h10v7H1zM1 1v2h10V1M1 16v-2h10v2M15 1v3m0 4v8" /><path d="M13.500 6h3" strokeWidth="2.500" /></svg></button>
            <nav className="ml-[3px] flex h-full min-w-0 flex-1">
                {taskItems.map((item) => (
                    <button key={item.name} aria-label={item.name} className={`flex min-w-0 flex-1 flex-col items-center ${item.active ? 'bg-[#555]' : ''}`}>
                        <span className="flex h-7 items-center">{item.icon}</span>
                        <span className={`h-0.5 ${item.active ? 'w-full' : 'w-6'} ${item.open ? 'bg-[#8fc7f3]' : ''}`} />
                    </button>
                ))}
            </nav>
            <div className="flex h-full w-[251px] shrink-0 items-center">
                <svg className="ml-[9px]" viewBox="0 0 14 8" width="13" height="8" fill="none" stroke="white" strokeWidth="1.500"><path d="m1 7 6-6 6 6" /></svg>
                <svg className="ml-[11px]" viewBox="0 0 14 18" width="13" height="17" fill="none" stroke="white" strokeWidth="1.200"><path d="M1 6h8v7H1zM9 8l3-2v7l-3-2M3 3c2-2 5-2 7 0M3 16c2 2 5 2 7 0" /></svg>
                <svg className="ml-[9px]" viewBox="0 0 17 13" width="17" height="13" fill="none" stroke="white"><path d="M5.500 4.500h10v6h-10z" /><path d="M7 6h7v3H7z" fill="white" /><path d="M1 3h4v3H1zM2 1v2m2-2v2M3 6v4h2" /></svg>
                <svg className="ml-2.5" viewBox="0 0 15 15" width="14" height="14" fill="none" stroke="white" strokeWidth="1.200"><path d="M1 13C1 6 6 1 13 1M4 13c0-5 4-9 9-9M7 13c0-3 3-6 6-6M10 13c0-1 1-3 3-3" /></svg>
                <svg className="ml-2" viewBox="0 0 18 14" width="17" height="14" fill="none" stroke="white" strokeWidth="1.200"><path d="M1 5h2l4-4v12L3 9H1zM9 5c1 1 1 3 0 4M11.500 3c2 2 2 6 0 8M14 1c3 3 3 9 0 12" /></svg>
                <span className="ml-[9px] w-[35px]">ENG</span>
                <span className="w-[34px]">10:30</span>
                <button aria-label="Notifications" className="ml-1 flex h-full w-10 items-center justify-center bg-[#333]">
                    <svg viewBox="0 0 18 17" width="17" height="16" fill="none" stroke="white" strokeWidth="1.400"><path d="M1 1h15v8M1 1v11h6v3l3-3" /><path d="M15 8c-1 4-2 5-5 6 4 2 8-1 5-6z" fill="white" /></svg>
                </button>
                <span className="ml-2 h-full w-px bg-[#666]" />
            </div>
        </footer>
    );
}

/* ---------- page ---------- */

export default function App() {
    return (
        <div className="flex min-h-screen flex-col bg-[#ebe4ff] font-['Liberation_Sans',Arial,sans-serif] text-[13px] leading-4 text-black">
            <header className="flex h-[23px] items-center bg-white pl-0.5">
                <BooksIcon size={18} />
                <h1 className="pl-[3px] font-['Open_Sans',sans-serif] text-[11px]">TaxPro IT 2022 Ver 22.1.6 (Platinum)</h1>
                <div className="ml-auto flex items-center">
                    <button aria-label="Minimise" className="flex w-[46px] justify-center"><svg width="10" height="10" stroke="black"><path d="M0 5.500h10" /></svg></button>
                    <button aria-label="Restore" className="flex w-[46px] justify-center"><svg width="11" height="11" fill="none" stroke="black"><path d="M.5 2.500h7v7h-7zM2.500 2.500v-2h7v7h-2" /></svg></button>
                    <button aria-label="Close" className="flex w-12 justify-center"><svg width="11" height="11" stroke="black"><path d="m.5.5 10 10m0-10-10 10" /></svg></button>
                </div>
            </header>
            <div className="flex h-[25px] items-center bg-gradient-to-b from-[#fcfcfc] to-[#efefef] pl-[3px] pr-1 font-bold">
                <span className="h-3.5 border-l-2 border-dotted border-[#aaa]" />
                <span className="pl-2">User Id</span>
                <span className="ml-1.5 border-l border-[#bbb] pl-1.5 text-[15px]">sales@taxpro.co.in (1512381907)</span>
                <span className="ml-auto">Mon, 23-May-2022</span>
            </div>

            <main className="flex flex-1 pt-[3px]">
                <div className="w-[968px] shrink-0">
                    <div className="grid grid-cols-[380px_56px_minmax(0,1fr)] pl-3">
                        <LeftPanel />
                        <IconStrip />
                        <CentrePanel />
                    </div>
                    <FunctionKeys />
                    <Products />
                </div>
                <RightColumn />
            </main>

            <Taskbar />
        </div>
    );
}
